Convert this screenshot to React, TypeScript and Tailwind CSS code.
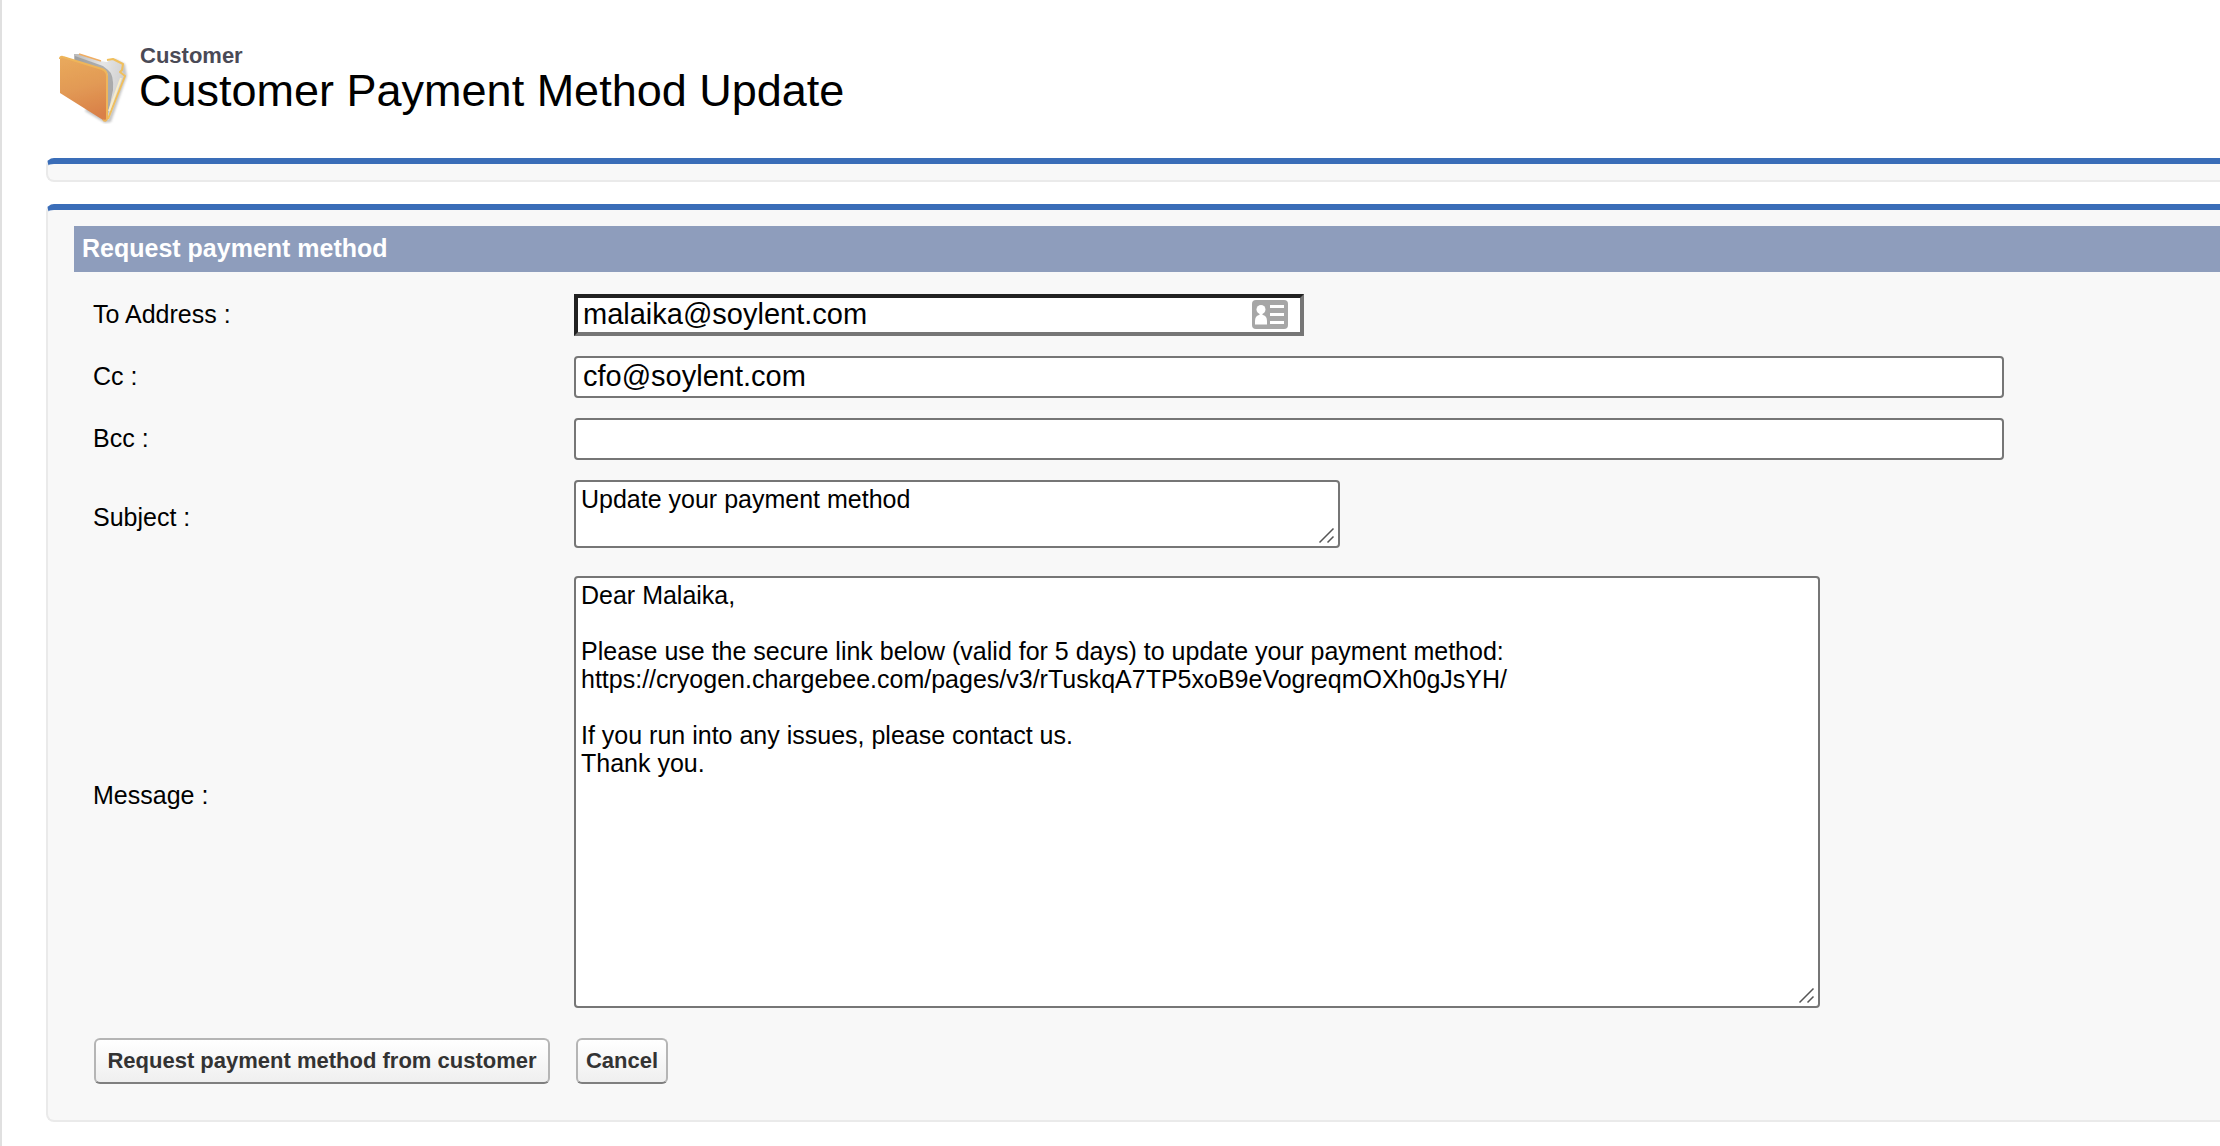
import type { ReactNode } from "react";

function FolderIcon() {
  return (
    <svg viewBox="0 0 74 74" className="h-[74px] w-[74px] shrink-0" aria-hidden="true">
      <defs>
        <linearGradient id="front" x1="0.2" y1="0" x2="0.4" y2="1">
          <stop offset="0" stopColor="#e9a95c" />
          <stop offset="0.5" stopColor="#e29a55" />
          <stop offset="1" stopColor="#d98048" />
        </linearGradient>
        <linearGradient id="paper" x1="0" y1="0" x2="1" y2="0.3">
          <stop offset="0" stopColor="#b9b9b9" />
          <stop offset="0.55" stopColor="#e6e6e6" />
          <stop offset="1" stopColor="#cfcfcf" />
        </linearGradient>
        <filter id="soft" x="-10%" y="-10%" width="120%" height="120%">
          <feGaussianBlur stdDeviation="1.2" />
        </filter>
        <filter id="edge" x="-5%" y="-5%" width="110%" height="110%">
          <feGaussianBlur stdDeviation="0.5" />
        </filter>
      </defs>
      <path d="M60 9 70 14 72 26 56 72 50 73 30 61z" fill="#8d8d8d" opacity="0.5" filter="url(#soft)" />
      <g filter="url(#edge)">
        <path d="M19 10V4h6L45 11 52 12 56 9 60 9 68 14 67 21 71 26 54 70 50 70z" fill="url(#paper)" />
        <path d="M20 11 48 19Q52 20 53 26L53 64 58 40Q59 24 53 20L48 16 20 6z" fill="#8f9192" opacity="0.65" />
        <path d="M24 4 46 11" stroke="#f0ad62" strokeWidth="1.500" fill="none" />
        <path d="M52 10 58 9 68 14 67 20 65 22 70 26 53 69" stroke="#f0bf5c" strokeWidth="2" fill="none" strokeLinejoin="round" />
        <path d="M66 28 54 61" stroke="#f8edc9" strokeWidth="2" fill="none" />
        <path d="M5 8Q5 6 8 7L47 19Q52 21 52 26L52 69Q51 72 48 70L5 43z" fill="url(#front)" />
        <path d="M5 9Q5 6 8 7L47 19Q52 21 52 26L52 69Q51 72 48 70" stroke="#eeb55a" strokeWidth="2" fill="none" />
      </g>
    </svg>
  );
}

function ContactCardIcon() {
  return (
    <svg viewBox="0 0 36 30" className="h-[30px] w-9" aria-hidden="true">
      <rect width="36" height="29" rx="4" fill="#a6a6a6" />
      <circle cx="9" cy="9.500" r="4.500" fill="#fff" />
      <path d="M7.500 12h3v3.500h-3z" fill="#fff" />
      <path d="M3 24.500V21Q3 16 7 15h4Q15 16 15 21v3.500z" fill="#fff" />
      <path d="M18 6.500h14M18 14.500h14M18 22.500h14" stroke="#fff" strokeWidth="3" />
    </svg>
  );
}

function ResizeGrip() {
  return (
    <svg
      viewBox="0 0 24 24"
      className="pointer-events-none absolute right-0 bottom-0 size-6"
      aria-hidden="true"
    >
      <path d="M3.500 18.500 17.500 4.500M11.500 18.500 17.500 12.500" stroke="#555" strokeWidth="1.500" fill="none" />
    </svg>
  );
}

type RowProps = { id: string; label: string; multiline?: boolean; children: ReactNode };

function Row({ id, label, multiline = false, children }: RowProps) {
  return (
    <div className="flex items-center">
      <label htmlFor={id} className={`w-[481px] shrink-0 leading-7 ${multiline ? "pt-[6px]" : "pb-[3px]"}`}>
        {label} :
      </label>
      <div className="min-w-0 flex-1">{children}</div>
    </div>
  );
}

const message = `Dear Malaika,

Please use the secure link below (valid for 5 days) to update your payment method:
https://cryogen.chargebee.com/pages/v3/rTuskqA7TP5xoB9eVogreqmOXh0gJsYH/

If you run into any issues, please contact us.
Thank you.`;

const input =
  "block h-[42px] w-full max-w-[1430px] rounded-[4px] border-2 border-[#767676] bg-white px-[7px] pb-[2px] text-[29px] leading-8 outline-none";
const area =
  "block w-full resize-none overflow-hidden rounded-[4px] border-2 border-[#767676] bg-white px-[5px] pt-[3px] pb-1 leading-7 outline-none";
const button =
  "h-[46px] rounded-md border-2 border-[#b5b5b5] border-b-[#7f7f7f] bg-linear-to-b from-white to-[#efefef] text-[22px] leading-7 font-bold whitespace-nowrap text-[#333]";

export default function App() {
  return (
    <main className="min-h-screen overflow-x-hidden border-l-2 border-[#e0e0e0] bg-white pb-6 pl-11 font-['Liberation_Sans',Arial,sans-serif] text-[25px] text-black">
      <header className="flex items-start gap-[10px] pt-[50px] pl-[9px]">
        <FolderIcon />
        <div className="-mt-2">
          <p className="pl-px text-[22px] leading-7 font-bold text-[#4a4a56]">Customer</p>
          <h1 className="text-[45px] leading-[42px]">Customer Payment Method Update</h1>
        </div>
      </header>

      <div className="mt-[34px] h-6 rounded-l-lg border-2 border-t-6 border-r-0 border-[#eaeaea] border-t-[#3a6db8] bg-[#f8f8f8]" />

      <section className="mt-[22px] rounded-l-lg border-2 border-t-6 border-r-0 border-[#eaeaea] border-t-[#3a6db8] bg-[#f8f8f8] pt-4 pb-9 pl-[26px]">
        <h2 className="bg-[#8e9dbc] px-2 pt-[7px] pb-[9px] leading-[30px] font-bold text-white">
          Request payment method
        </h2>
        <form className="pt-[22px] pl-[19px]" onSubmit={(e) => e.preventDefault()}>
          <div className="flex flex-col gap-5">
            <Row id="to" label="To Address">
              <div className="relative w-full max-w-[730px]">
                <input
                  id="to"
                  type="text"
                  defaultValue="malaika@soylent.com"
                  className="block h-[42px] w-full border-4 border-t-[#212121] border-r-[#767676] border-b-[#767676] border-l-[#212121] bg-white pr-14 pb-[2px] pl-[5px] text-[29px] leading-8 outline-none"
                />
                <span className="absolute top-[6px] right-4">
                  <ContactCardIcon />
                </span>
              </div>
            </Row>
            <Row id="cc" label="Cc">
              <input id="cc" type="text" defaultValue="cfo@soylent.com" className={input} />
            </Row>
            <Row id="bcc" label="Bcc">
              <input id="bcc" type="text" className={input} />
            </Row>
            <Row id="subject" label="Subject" multiline>
              <div className="relative w-full max-w-[766px]">
                <textarea id="subject" defaultValue="Update your payment method" className={`${area} h-[68px]`} />
                <ResizeGrip />
              </div>
            </Row>
          </div>
          <div className="mt-7">
            <Row id="message" label="Message" multiline>
              <div className="relative w-full max-w-[1246px]">
                <textarea id="message" defaultValue={message} className={`${area} h-[432px]`} />
                <ResizeGrip />
              </div>
            </Row>
          </div>
          <div className="mt-[30px] flex gap-[26px] pl-px">
            <button type="submit" className={`${button} w-[456px]`}>
              Request payment method from customer
            </button>
            <button type="button" className={`${button} w-[92px]`}>
              Cancel
            </button>
          </div>
        </form>
      </section>
    </main>
  );
}
